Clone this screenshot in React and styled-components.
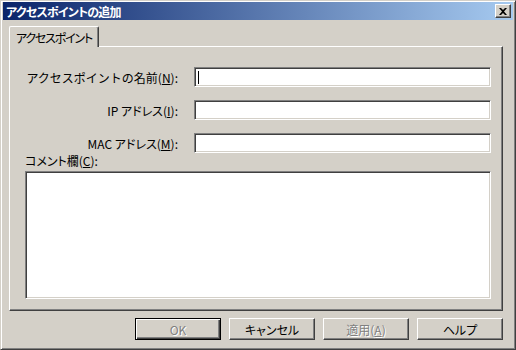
import React from "react";
import styled, { createGlobalStyle } from "styled-components";

const GlobalStyle = createGlobalStyle`
  html, body {
    margin: 0;
    padding: 0;
    background: #d4d0c8;
  }
  body {
    font-family: "Noto Sans CJK JP", "DejaVu Sans", sans-serif;
    font-size: 12px;
    font-feature-settings: "palt";
  }
`;

const Window = styled.div`
  box-sizing: border-box;
  width: 516px;
  height: 350px;
  background: #d4d0c8;
  border: 1px solid;
  border-color: #d4d0c8 #404040 #404040 #d4d0c8;
  box-shadow: inset 1px 1px 0 #ffffff, inset -1px -1px 0 #808080;
  padding: 1px 2px 2px 1px;
  display: flex;
  flex-direction: column;
`;

const TitleBar = styled.div`
  height: 18px;
  margin-left: 1px;
  padding: 0 2px 0 3px;
  display: flex;
  align-items: center;
  justify-content: space-between;
  background: linear-gradient(to right, #0a246a, #a6caf0);
  color: #ffffff;
  font-weight: bold;
  font-size: 12px;
  letter-spacing: -0.8px;
`;

const CloseButton = styled.div`
  box-sizing: border-box;
  width: 16px;
  height: 14px;
  background: #d4d0c8;
  border: 1px solid;
  border-color: #ffffff #404040 #404040 #ffffff;
  box-shadow: inset -1px -1px 0 #808080;
  display: flex;
  align-items: center;
  justify-content: center;
`;

const Body = styled.div`
  flex: 1;
  padding: 6px 10px 0 7px;
  display: flex;
  flex-direction: column;
`;

const TabStrip = styled.div`
  display: flex;
  height: 20px;
  position: relative;
  z-index: 1;
`;

const Tab = styled.div`
  box-sizing: border-box;
  height: 21px;
  padding: 0 6px 0 6px;
  display: flex;
  align-items: center;
  background: #d4d0c8;
  border-top: 1px solid #ffffff;
  border-left: 1px solid #ffffff;
  border-right: 1px solid #404040;
  border-radius: 2px 2px 0 0;
  box-shadow: inset -1px 0 0 #808080;
  color: #000000;
  letter-spacing: -1.2px;
`;

const Panel = styled.div`
  box-sizing: border-box;
  height: 265px;
  border: 1px solid;
  border-color: #ffffff #404040 #404040 #ffffff;
  box-shadow: inset -1px -1px 0 #808080;
  padding: 20px 11px 11px 15px;
  display: flex;
  flex-direction: column;
`;

const Row = styled.div`
  display: flex;
  align-items: center;
  height: 20px;
  margin-bottom: 13px;
`;

const Label = styled.div`
  width: 153px;
  margin-right: 16px;
  text-align: right;
  white-space: nowrap;
  color: #000000;
  font-feature-settings: ${(p) => (p.$wide ? "normal" : "palt")};
`;

const Key = styled.span`
  text-decoration: underline;
`;

const Field = styled.div`
  box-sizing: border-box;
  flex: 1;
  height: ${(p) => (p.$tall ? "128px" : "20px")};
  background: #ffffff;
  border: 1px solid;
  border-color: #808080 #ffffff #ffffff #808080;
  box-shadow: inset 1px 1px 0 #404040, inset -1px -1px 0 #d4d0c8;
  padding: 3px 3px;
  display: flex;
  align-items: flex-start;
`;

const Caret = styled.span`
  display: inline-block;
  width: 1px;
  height: 13px;
  background: #000000;
`;

const CommentLabel = styled.div`
  margin-top: -13px;
  height: 19px;
  line-height: 16px;
  color: #000000;
`;

const CommentArea = styled.div`
  display: flex;
`;

const ButtonRow = styled.div`
  display: flex;
  justify-content: flex-end;
  gap: 8px;
  margin-top: 7px;
`;

const Button = styled.div`
  box-sizing: border-box;
  width: 86px;
  height: 22px;
  display: flex;
  align-items: center;
  justify-content: center;
  background: #d4d0c8;
  border: 1px solid;
  border-color: ${(p) =>
    p.$default ? "#000000" : "#ffffff #404040 #404040 #ffffff"};
  box-shadow: ${(p) =>
    p.$default
      ? "inset 1px 1px 0 #ffffff, inset -1px -1px 0 #404040, inset -2px -2px 0 #808080"
      : "inset -1px -1px 0 #808080"};
  color: ${(p) => (p.$disabled ? "#808080" : "#000000")};
  text-shadow: ${(p) => (p.$disabled ? "1px 1px 0 #ffffff" : "none")};
`;

export default function App() {
  return (
    <>
      <GlobalStyle />
      <Window>
        <TitleBar>
          <span>アクセスポイントの追加</span>
          <CloseButton>
            <svg width="8" height="7" viewBox="0 0 8 7">
              <path
                d="M0 0h2l2 2 2-2h2L5 3.5 8 7H6L4 5 2 7H0l3-3.5z"
                fill="#000"
              />
            </svg>
          </CloseButton>
        </TitleBar>
        <Body>
          <TabStrip>
            <Tab>アクセスポイント</Tab>
          </TabStrip>
          <Panel>
            <Row>
              <Label $wide>
                アクセスポイントの名前(<Key>N</Key>):
              </Label>
              <Field>
                <Caret />
              </Field>
            </Row>
            <Row>
              <Label>
                IP アドレス(<Key>I</Key>):
              </Label>
              <Field />
            </Row>
            <Row>
              <Label>
                MAC アドレス(<Key>M</Key>):
              </Label>
              <Field />
            </Row>
            <CommentLabel>
              コメント欄(<Key>C</Key>):
            </CommentLabel>
            <CommentArea>
              <Field $tall />
            </CommentArea>
          </Panel>
          <ButtonRow>
            <Button $default $disabled>
              OK
            </Button>
            <Button>キャンセル</Button>
            <Button $disabled>
              適用(<Key>A</Key>)
            </Button>
            <Button>ヘルプ</Button>
          </ButtonRow>
        </Body>
      </Window>
    </>
  );
}
